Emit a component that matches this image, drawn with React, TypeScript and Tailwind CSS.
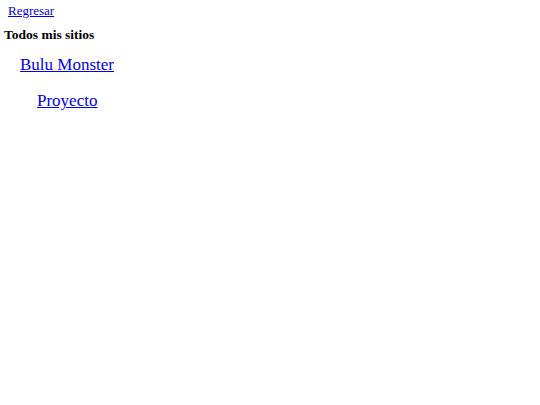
export default function App() {
  return (
    <div className="min-h-screen bg-white text-black font-['Liberation_Serif',serif] px-1 pt-[3px]">
      <div className="pl-1 text-[13px] leading-[16px]">
        <a href="#" className="text-[#0000ee] underline">
          Regresar
        </a>
      </div>
      <h3 className="mt-[8px] text-[13.5px] leading-[16px] font-bold">Todos mis sitios</h3>
      <ul className="mt-[12px] pl-4 text-[17px] leading-[20px]">
        <li>
          <a href="#" className="text-[#0000ee] underline">
            Bulu Monster
          </a>
          <ul className="mt-[16px] pl-[17px]">
            <li>
              <a href="#" className="text-[#0000ee] underline">
                Proyecto
              </a>
            </li>
          </ul>
        </li>
      </ul>
    </div>
  );
}
